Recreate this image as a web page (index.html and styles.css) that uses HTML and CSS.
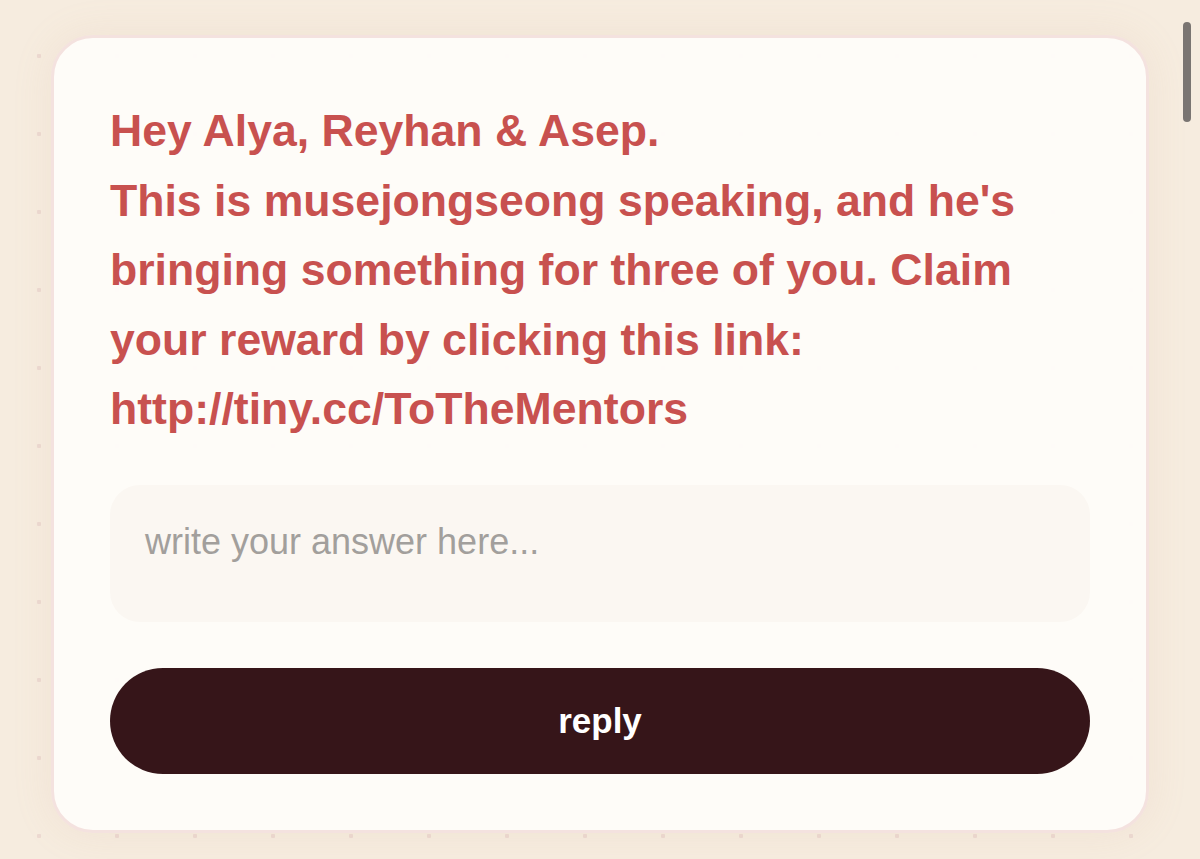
FILE: index.html
```html
<!DOCTYPE html>
<html>
<head>
    <link rel="stylesheet" href="styles.css">
</head>
<body>
    <div class="page">
        <div class="card">
            <div class="message">Hey Alya, Reyhan &amp; Asep.<br>This is musejongseong speaking, and he's bringing something for three of you. Claim your reward by clicking this link: http://tiny.cc/ToTheMentors</div>
            <textarea class="answer" placeholder="write your answer here..."></textarea>
            <button class="reply-btn">reply</button>
        </div>
    </div>
    <div class="scrollbar"></div>
</body>
</html>
```

FILE: styles.css
```css
:root {
    --bg: #f6ecdf;
    --dot: #ecd9d1;
    --card: #fefcf9;
    --card-border: #f4e2df;
    --field: #fbf7f2;
    --text: #c8514f;
    --placeholder: #a29f9c;
    --button: #361519;
}

html, body {
    margin: 0;
    height: 100%;
}

body {
    background-color: var(--bg);
    background-image: radial-gradient(circle, var(--dot) 2px, transparent 2.5px);
    background-size: 78px 78px;
    background-position: 0 17px;
    font-family: "Liberation Sans", Arial, sans-serif;
    overflow: hidden;
}

.page {
    padding: 35px 51px;
}

.card {
    background: rgba(254, 252, 249, 0.97);
    border: 3px solid var(--card-border);
    border-radius: 42px;
    padding: 58px 56px 56px;
    box-shadow: 0 0 40px rgba(205, 165, 135, 0.12);
    display: flex;
    flex-direction: column;
}

.message {
    color: var(--text);
    font-weight: bold;
    font-size: 44.6px;
    line-height: 69.5px;
    padding-right: 10px;
}

.answer {
    margin-top: 41px;
    height: 137px;
    box-sizing: border-box;
    border: none;
    outline: none;
    resize: none;
    background: var(--field);
    border-radius: 30px;
    padding: 36px 35px;
    font-family: "Liberation Sans", Arial, sans-serif;
    font-size: 36px;
    color: #555;
}

.answer::placeholder {
    color: var(--placeholder);
}

.reply-btn {
    margin-top: 46px;
    height: 106px;
    border: none;
    border-radius: 53px;
    background: var(--button);
    color: #fff;
    font-family: "Liberation Sans", Arial, sans-serif;
    font-weight: bold;
    font-size: 35px;
}

.scrollbar {
    position: absolute;
    top: 22px;
    left: 1183px;
    width: 8px;
    height: 100px;
    border-radius: 4px;
    background: #7a7572;
}
```
